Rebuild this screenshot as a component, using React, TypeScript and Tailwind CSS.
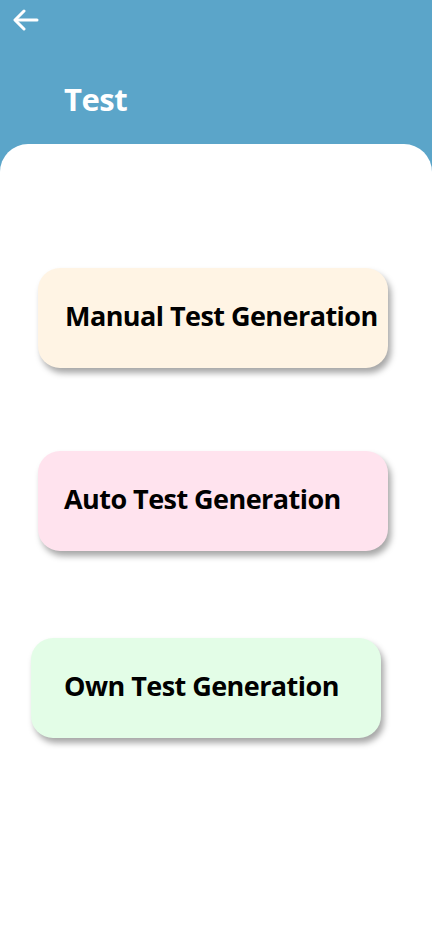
import React from "react";

function Card({ label, bg, offset, pl }: { label: string; bg: string; offset: string; pl: string }) {
  return (
    <div className={`${offset} w-[350px] h-[100px] rounded-[22px] ${bg} shadow-[3px_5px_6px_rgba(0,0,0,0.35)] flex items-center pb-[4px] ${pl}`}>
      <span className="text-[27px] font-bold text-black tracking-[-0.55px]" style={{ fontFamily: '"Open Sans", sans-serif' }}>
        {label}
      </span>
    </div>
  );
}

export default function App() {
  return (
    <div className="min-h-[936px] bg-[#5ba5c9] flex flex-col" style={{ fontFamily: '"Open Sans", sans-serif' }}>
      <div className="h-[144px] flex flex-col shrink-0">
        <div className="pl-[13px] pt-[9px] h-[40px]">
          <svg width="26" height="22" viewBox="0 0 26 22" fill="none" stroke="white" strokeWidth="3" strokeLinecap="round" strokeLinejoin="round">
            <path d="M24 11H3" />
            <path d="M11 2L2 11L11 20" />
          </svg>
        </div>
        <div className="pl-[64px] pt-[44px]">
          <span className="text-[31px] font-bold text-white leading-none tracking-[-0.5px]">Test</span>
        </div>
      </div>
      <div className="flex-1 bg-white rounded-t-[28px] flex flex-col pt-[124px]">
        <Card label="Manual Test Generation" bg="bg-[#fff4e4]" offset="ml-[38px]" pl="pl-[27px]" />
        <div className="h-[83px]" />
        <Card label="Auto Test Generation" bg="bg-[#ffe3ee]" offset="ml-[38px]" pl="pl-[26px]" />
        <div className="h-[87px]" />
        <Card label="Own Test Generation" bg="bg-[#e3fde7]" offset="ml-[31px]" pl="pl-[33px]" />
      </div>
    </div>
  );
}
